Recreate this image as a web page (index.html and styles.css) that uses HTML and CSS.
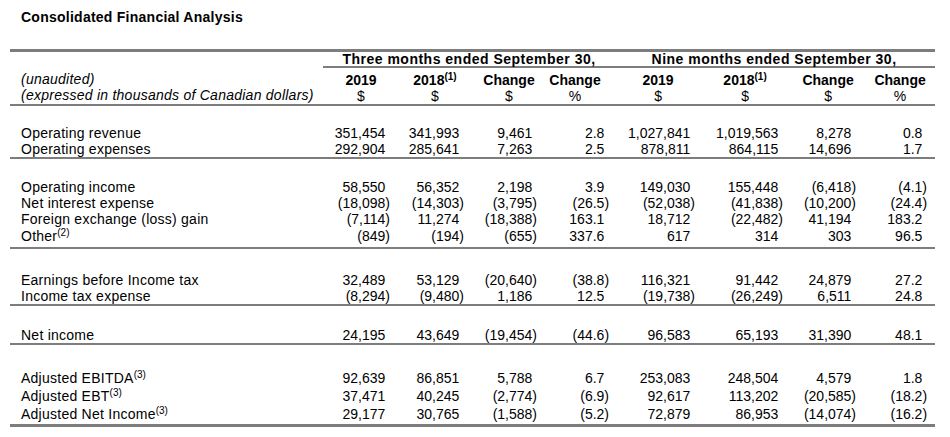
FILE: index.html
```html
<!DOCTYPE html>
<html>
<head>
<meta charset="utf-8">
<link rel="stylesheet" href="styles.css">
</head>
<body>
<div class="page">
  <h1 class="title">Consolidated Financial Analysis</h1>
  <table class="fin">
    <colgroup>
      <col class="w-label"><col class="w1"><col class="w2"><col class="w3"><col class="w4"><col class="w5"><col class="w6"><col class="w7"><col class="w8">
    </colgroup>
    <thead>
      <tr class="grp">
        <th class="lab"></th>
        <th colspan="4" class="g1">Three months ended September 30,</th>
        <th colspan="4" class="g2">Nine months ended September 30,</th>
      </tr>
      <tr class="hdr">
        <th class="lab"><i>(unaudited)<br>(expressed in thousands of Canadian dollars)</i></th>
        <th>2019<br><span class="cur">$</span></th>
        <th>2018<sup>(1)</sup><br><span class="cur">$</span></th>
        <th>Change<br><span class="cur">$</span></th>
        <th>Change<br><span class="cur">%</span></th>
        <th>2019<br><span class="cur">$</span></th>
        <th>2018<sup>(1)</sup><br><span class="cur">$</span></th>
        <th>Change<br><span class="cur">$</span></th>
        <th>Change<br><span class="cur">%</span></th>
      </tr>
    </thead>
    <tbody>
      <tr class="sp sp1"><td colspan="9"></td></tr>
      <tr><td>Operating revenue</td><td>351,454</td><td>341,993</td><td>9,461</td><td>2.8</td><td>1,027,841</td><td>1,019,563</td><td>8,278</td><td>0.8</td></tr>
      <tr class="ul"><td>Operating expenses</td><td>292,904</td><td>285,641</td><td>7,263</td><td>2.5</td><td>878,811</td><td>864,115</td><td>14,696</td><td>1.7</td></tr>
      <tr class="sp sp2"><td colspan="9"></td></tr>
      <tr><td>Operating income</td><td>58,550</td><td>56,352</td><td>2,198</td><td>3.9</td><td>149,030</td><td>155,448</td><td class="ng">(6,418)</td><td class="ng">(4.1)</td></tr>
      <tr><td>Net interest expense</td><td class="ng">(18,098)</td><td class="ng">(14,303)</td><td class="ng">(3,795)</td><td class="ng">(26.5)</td><td class="ng">(52,038)</td><td class="ng">(41,838)</td><td class="ng">(10,200)</td><td class="ng">(24.4)</td></tr>
      <tr><td>Foreign exchange (loss) gain</td><td class="ng">(7,114)</td><td>11,274</td><td class="ng">(18,388)</td><td>163.1</td><td>18,712</td><td class="ng">(22,482)</td><td>41,194</td><td>183.2</td></tr>
      <tr class="ul sx"><td>Other<sup>(2)</sup></td><td class="ng">(849)</td><td class="ng">(194)</td><td class="ng">(655)</td><td>337.6</td><td>617</td><td>314</td><td>303</td><td>96.5</td></tr>
      <tr class="sp sp3"><td colspan="9"></td></tr>
      <tr><td>Earnings before Income tax</td><td>32,489</td><td>53,129</td><td class="ng">(20,640)</td><td class="ng">(38.8)</td><td>116,321</td><td>91,442</td><td>24,879</td><td>27.2</td></tr>
      <tr class="ul"><td>Income tax expense</td><td class="ng">(8,294)</td><td class="ng">(9,480)</td><td>1,186</td><td>12.5</td><td class="ng">(19,738)</td><td class="ng">(26,249)</td><td>6,511</td><td>24.8</td></tr>
      <tr class="sp sp4"><td colspan="9"></td></tr>
      <tr class="ul"><td>Net income</td><td>24,195</td><td>43,649</td><td class="ng">(19,454)</td><td class="ng">(44.6)</td><td>96,583</td><td>65,193</td><td>31,390</td><td>48.1</td></tr>
      <tr class="sp sp5"><td colspan="9"></td></tr>
      <tr class="sm"><td>Adjusted EBITDA<sup>(3)</sup></td><td>92,639</td><td>86,851</td><td>5,788</td><td>6.7</td><td>253,083</td><td>248,504</td><td>4,579</td><td>1.8</td></tr>
      <tr class="sm"><td>Adjusted EBT<sup>(3)</sup></td><td>37,471</td><td>40,245</td><td class="ng">(2,774)</td><td class="ng">(6.9)</td><td>92,617</td><td>113,202</td><td class="ng">(20,585)</td><td class="ng">(18.2)</td></tr>
      <tr class="ul last"><td>Adjusted Net Income<sup>(3)</sup></td><td>29,177</td><td>30,765</td><td class="ng">(1,588)</td><td class="ng">(5.2)</td><td>72,879</td><td>86,953</td><td class="ng">(14,074)</td><td class="ng">(16.2)</td></tr>
    </tbody>
  </table>
</div>
</body>
</html>
```
FILE: styles.css
```css
html, body {
  margin: 0;
  padding: 0;
  background: #ffffff;
}

body {
  font-family: "Liberation Sans", Arial, sans-serif;
  font-size: 14px;
  color: #000000;
}

.page {
  padding: 9px 15px 0 10px;
}

.title {
  margin: 0 0 0 11px;
  font-size: 14px;
  line-height: 16px;
  font-weight: bold;
  letter-spacing: 0.25px;
}

.fin {
  margin-top: 24px;
  width: 925px;
  border-collapse: collapse;
  table-layout: fixed;
  line-height: 16px;
}

.w-label { width: 313px; }
.w1 { width: 67px; }
.w2 { width: 74px; }
.w3 { width: 73px; }
.w4 { width: 72px; }
.w5 { width: 86px; }
.w6 { width: 88px; }
.w7 { width: 73px; }
.w8 { width: 79px; }

.fin th,
.fin td {
  padding: 0;
  white-space: nowrap;
  box-sizing: border-box;
}

/* header rows */
.grp th {
  border-top: 3px solid #7d7d7d;
  line-height: 14px;
  height: 14px;
  font-weight: bold;
  text-align: center;
  letter-spacing: 0.5px;
}

.grp th.g1,
.grp th.g2 {
  border-bottom: 2px solid #7d7d7d;
}

.grp th.g1 { padding-left: 6px; }
.grp th.g2 { padding-left: 12px; padding-right: 8px; }

.hdr th {
  padding-top: 4px;
  border-bottom: 2px solid #7d7d7d;
  font-weight: bold;
  text-align: center;
  vertical-align: top;
}

.hdr th.lab {
  text-align: left;
  font-weight: normal;
  padding-left: 11px;
  letter-spacing: 0.25px;
}

.cur {
  font-weight: normal;
}

.fin sup {
  font-size: 10px;
  line-height: 0;
  vertical-align: 5px;
  letter-spacing: 0;
}

/* column offsets for centred headings */
.hdr th:nth-child(2) { padding-left: 9px; }
.hdr th:nth-child(3) { padding-left: 16px; }
.hdr th:nth-child(4) { padding-left: 17px; }
.hdr th:nth-child(5) { padding-left: 4px; }
.hdr th:nth-child(6) { padding-left: 12px; }
.hdr th:nth-child(7) { padding-left: 12px; }
.hdr th:nth-child(8) { padding-left: 17px; }
.hdr th:nth-child(9) { padding-left: 17px; padding-right: 8px; }

/* body */
.fin tbody td {
  text-align: right;
  padding-right: 4.7px;
}

.fin tbody td.ng {
  padding-right: 0;
}

.fin tbody td:first-child {
  text-align: left;
  padding-left: 11px;
  padding-right: 0;
  letter-spacing: 0.25px;
}

.fin tbody td:nth-child(9) {
  padding-right: 12.7px;
}

.fin tbody td.ng:nth-child(9) {
  padding-right: 8px;
}

.fin tr.sx td {
  padding-top: 1px;
  padding-bottom: 3px;
}

.fin tr.sm td {
  padding-top: 1px;
  padding-bottom: 1px;
}

.fin tr.last td {
  padding-top: 1px;
  padding-bottom: 2px;
}

.fin tr.ul td {
  border-bottom: 2px solid #7d7d7d;
}

.fin tr.last td {
  border-bottom: 3px solid #7d7d7d;
}

.fin tr.sp td {
  padding: 0;
}

.fin tr.sp1 td { height: 20px; }
.fin tr.sp2 td { height: 21px; }
.fin tr.sp3 td { height: 24px; }
.fin tr.sp4 td { height: 22px; }
.fin tr.sp5 td { height: 25px; }
```
